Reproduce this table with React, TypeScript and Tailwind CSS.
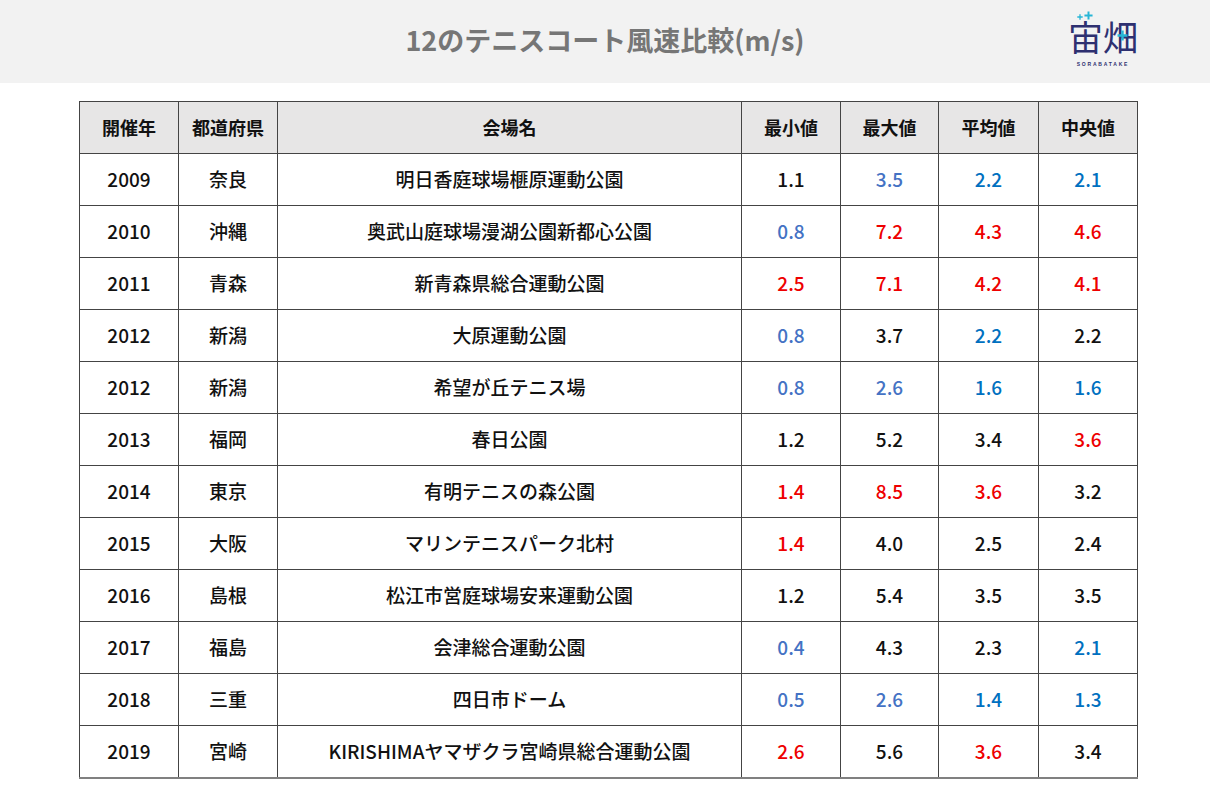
const B = 'text-[#4472c4]'
const D = 'text-[#0070c0]'
const R = 'text-[#ee0000]'
const K = 'text-[#111111]'

type Cell = [string, string]

const rows: { year: string; pref: string; venue: string; vals: Cell[] }[] = [
  { year: '2009', pref: '奈良', venue: '明日香庭球場榧原運動公園', vals: [['1.1', K], ['3.5', B], ['2.2', D], ['2.1', D]] },
  { year: '2010', pref: '沖縄', venue: '奥武山庭球場漫湖公園新都心公園', vals: [['0.8', B], ['7.2', R], ['4.3', R], ['4.6', R]] },
  { year: '2011', pref: '青森', venue: '新青森県総合運動公園', vals: [['2.5', R], ['7.1', R], ['4.2', R], ['4.1', R]] },
  { year: '2012', pref: '新潟', venue: '大原運動公園', vals: [['0.8', B], ['3.7', K], ['2.2', D], ['2.2', K]] },
  { year: '2012', pref: '新潟', venue: '希望が丘テニス場', vals: [['0.8', B], ['2.6', B], ['1.6', D], ['1.6', D]] },
  { year: '2013', pref: '福岡', venue: '春日公園', vals: [['1.2', K], ['5.2', K], ['3.4', K], ['3.6', R]] },
  { year: '2014', pref: '東京', venue: '有明テニスの森公園', vals: [['1.4', R], ['8.5', R], ['3.6', R], ['3.2', K]] },
  { year: '2015', pref: '大阪', venue: 'マリンテニスパーク北村', vals: [['1.4', R], ['4.0', K], ['2.5', K], ['2.4', K]] },
  { year: '2016', pref: '島根', venue: '松江市営庭球場安来運動公園', vals: [['1.2', K], ['5.4', K], ['3.5', K], ['3.5', K]] },
  { year: '2017', pref: '福島', venue: '会津総合運動公園', vals: [['0.4', B], ['4.3', K], ['2.3', K], ['2.1', D]] },
  { year: '2018', pref: '三重', venue: '四日市ドーム', vals: [['0.5', B], ['2.6', B], ['1.4', D], ['1.3', D]] },
  { year: '2019', pref: '宮崎', venue: 'KIRISHIMAヤマザクラ宮崎県総合運動公園', vals: [['2.6', R], ['5.6', K], ['3.6', R], ['3.4', K]] },
]

const heads = ['開催年', '都道府県', '会場名', '最小値', '最大値', '平均値', '中央値']
const widths = ['w-[99px]', 'w-[99px]', 'w-[464px]', 'w-[99px]', 'w-[98px]', 'w-[100px]', 'w-[99px]']

const font = { fontFamily: '"Noto Sans CJK JP", "Noto Sans", sans-serif' }

function Plus({ size }: { size: number }) {
  return (
    <svg width={size} height={size} viewBox="0 0 10 10">
      <path d="M5 0.5v9M0.5 5h9" stroke="#27b5d6" strokeWidth="2.2" />
    </svg>
  )
}

function Logo() {
  return (
    <div className="relative flex flex-col items-center mr-[72px] mt-[2px]">
      <div className="absolute left-[9px] top-[-8px] flex items-end gap-[1px]">
        <Plus size={6} />
        <Plus size={9} />
      </div>
      <div className="absolute right-[10px] top-[11px]">
        <Plus size={11} />
      </div>
      <span className="h-[34px] text-[35px] leading-[34px] font-normal text-[#2e3070] tracking-[0px]">宙畑</span>
      <span className="mt-[9px] text-[5px] font-bold leading-none tracking-[1.8px] text-[#2e3070]" style={{ fontFamily: '"Liberation Sans", sans-serif' }}>SORABATAKE</span>
    </div>
  )
}

export default function App() {
  return (
    <div className="w-[1210px] h-[805px] bg-white overflow-hidden" style={font}>
      <div className="h-[83px] bg-[#f2f2f2] flex items-center relative">
        <h1 className="absolute inset-x-0 top-[22px] leading-[36px] text-center text-[27px] font-bold text-[#767676]">
          12のテニスコート風速比較(m/s)
        </h1>
        <div className="ml-auto">
          <Logo />
        </div>
      </div>

      <table className="ml-[79px] mt-[18px] w-[1058px] border-collapse table-fixed border-b-2 border-b-[#808080]">
        <thead>
          <tr className="h-[52px] bg-[#e7e6e6]">
            {heads.map((h, i) => (
              <th key={i} className={`${widths[i]} border border-[#444] text-[18px] font-bold text-[#111] text-center`}>
                {h}
              </th>
            ))}
          </tr>
        </thead>
        <tbody>
          {rows.map((r, i) => (
            <tr key={i} className="h-[52px]">
              <td className="border border-[#444] text-center text-[19px] font-medium text-[#111]">{r.year}</td>
              <td className="border border-[#444] text-center text-[19px] font-medium text-[#111]">{r.pref}</td>
              <td className="border border-[#444] text-center text-[19px] font-medium text-[#111]">{r.venue}</td>
              {r.vals.map(([v, c], j) => (
                <td key={j} className={`border border-[#444] text-center text-[19px] font-medium ${c}`}>{v}</td>
              ))}
            </tr>
          ))}
        </tbody>
      </table>
    </div>
  )
}
